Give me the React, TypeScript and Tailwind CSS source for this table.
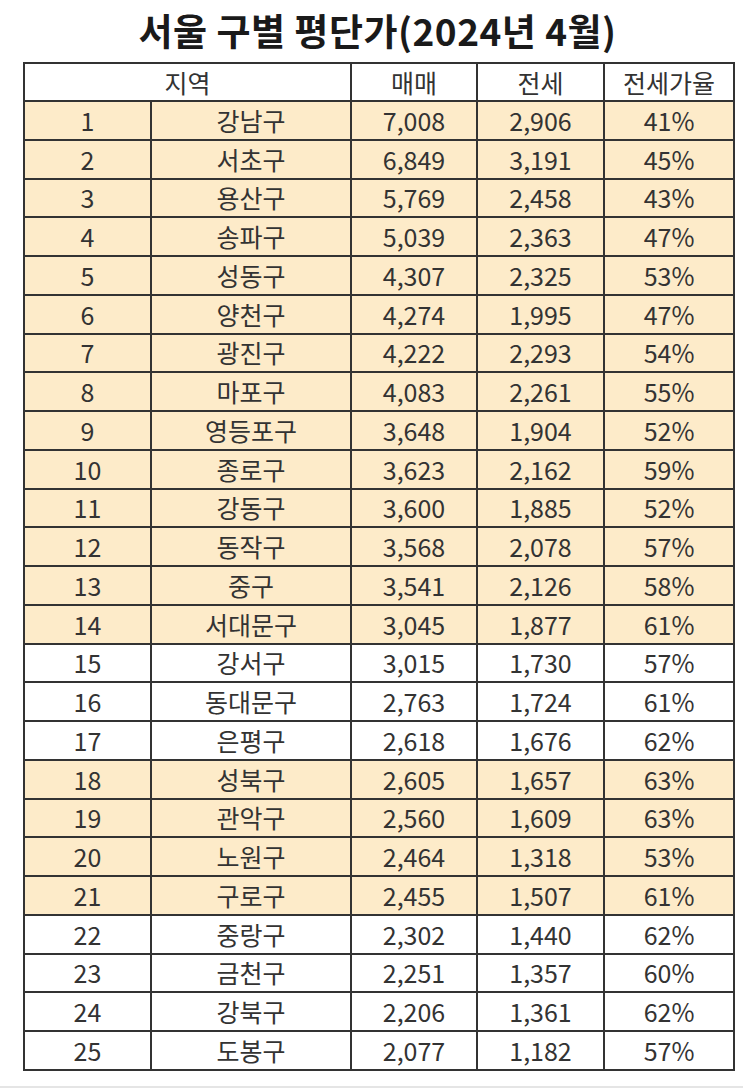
const rows: [number, string, string, string, string, boolean][] = [
    [1, "강남구", "7,008", "2,906", "41%", true],
    [2, "서초구", "6,849", "3,191", "45%", true],
    [3, "용산구", "5,769", "2,458", "43%", true],
    [4, "송파구", "5,039", "2,363", "47%", true],
    [5, "성동구", "4,307", "2,325", "53%", true],
    [6, "양천구", "4,274", "1,995", "47%", true],
    [7, "광진구", "4,222", "2,293", "54%", true],
    [8, "마포구", "4,083", "2,261", "55%", true],
    [9, "영등포구", "3,648", "1,904", "52%", true],
    [10, "종로구", "3,623", "2,162", "59%", true],
    [11, "강동구", "3,600", "1,885", "52%", true],
    [12, "동작구", "3,568", "2,078", "57%", true],
    [13, "중구", "3,541", "2,126", "58%", true],
    [14, "서대문구", "3,045", "1,877", "61%", true],
    [15, "강서구", "3,015", "1,730", "57%", false],
    [16, "동대문구", "2,763", "1,724", "61%", false],
    [17, "은평구", "2,618", "1,676", "62%", false],
    [18, "성북구", "2,605", "1,657", "63%", true],
    [19, "관악구", "2,560", "1,609", "63%", true],
    [20, "노원구", "2,464", "1,318", "53%", true],
    [21, "구로구", "2,455", "1,507", "61%", true],
    [22, "중랑구", "2,302", "1,440", "62%", false],
    [23, "금천구", "2,251", "1,357", "60%", false],
    [24, "강북구", "2,206", "1,361", "62%", false],
    [25, "도봉구", "2,077", "1,182", "57%", false],
]

const font = { fontFamily: '"Noto Sans CJK KR", "Noto Sans", sans-serif' }

export default function App() {
    return (
        <div className="w-[743px] h-[1088px] bg-white text-[#333] flex flex-col" style={font}>
            <h1 className="h-[62px] flex items-center justify-center pl-[12px] text-[37px] font-bold text-[#1a1a1a] tracking-[0.5px]">
                서울 구별 평단가(2024년 4월)
            </h1>
            <table className="ml-[23px] w-[710px] border-collapse border-2 border-[#333] text-[25px] leading-none table-fixed">
                <colgroup>
                    <col className="w-[127px]" />
                    <col className="w-[200px]" />
                    <col className="w-[126px]" />
                    <col className="w-[127px]" />
                    <col className="w-[130px]" />
                </colgroup>
                <thead>
                    <tr className="h-[38px]">
                        <th colSpan={2} className="border-2 border-[#333] font-normal">지역</th>
                        <th className="border-2 border-[#333] font-normal">매매</th>
                        <th className="border-2 border-[#333] font-normal">전세</th>
                        <th className="border-2 border-[#333] font-normal">전세가율</th>
                    </tr>
                </thead>
                <tbody>
                    {rows.map(([n, gu, sale, jeonse, rate, hl]) => (
                        <tr key={n} className={hl ? "h-[38.76px] bg-[#fdebc9]" : "h-[38.76px] bg-white"}>
                            <td className="border-2 border-[#333] text-center">{n}</td>
                            <td className="border-2 border-[#333] text-center">{gu}</td>
                            <td className="border-2 border-[#333] text-center">{sale}</td>
                            <td className="border-2 border-[#333] text-center">{jeonse}</td>
                            <td className="border-2 border-[#333] text-center">{rate}</td>
                        </tr>
                    ))}
                </tbody>
            </table>
            <div className="mt-auto h-[2px] bg-[#e5e5e5]" />
        </div>
    )
}
